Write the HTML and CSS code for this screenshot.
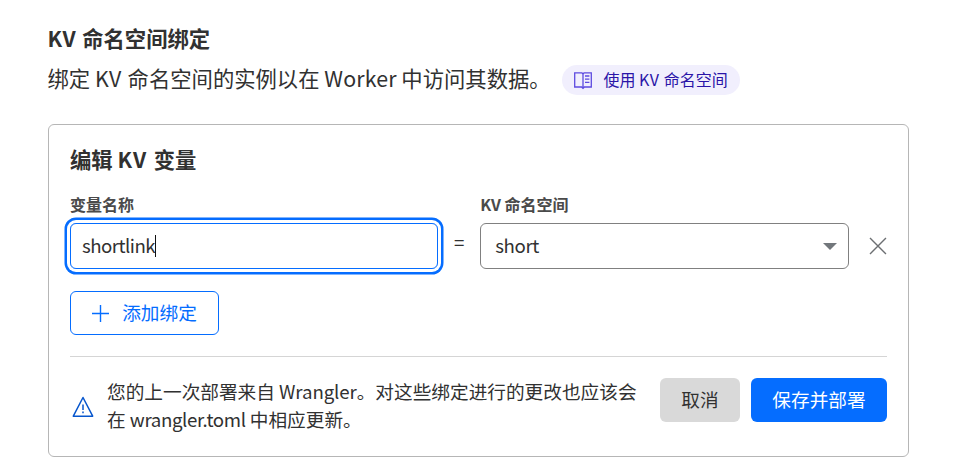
FILE: index.html
```html
<!DOCTYPE html>
<html lang="zh-CN">
<head>
<meta charset="utf-8">
<title>KV 命名空间绑定</title>
<link rel="stylesheet" href="styles.css">
</head>
<body>
<main class="page">
  <h1 class="heading"><span class="kv">KV </span>命名空间绑定</h1>
  <div class="intro">
    <p class="intro-text">绑定 <span class="kv-light">KV </span>命名空间的实例以在 <span class="worker">Worker</span> 中访问其数据。</p>
    <a class="doc-link">
      <svg class="book" width="20" height="20" viewBox="0 0 20 20" fill="none" stroke="currentColor" stroke-width="1.3"><path d="M10 4.2 9 2.8H1.7V17H8.6L10 18.4 11.4 17H18.3V2.8H11L10 4.2V18"/><path d="M12 6h4.4M12 9.2h4.4M12 12.4h4.4"/></svg>
      <span class="doc-text">使用 <span class="kv-small">KV </span>命名空间</span>
    </a>
  </div>
  <section class="card">
    <h2 class="heading">编辑 <span class="kv-wide">KV </span>变量</h2>
    <div class="fields">
      <div class="field">
        <label class="label">变量名称</label>
        <div class="input focused"><span class="value">shortlink</span><i class="caret"></i></div>
      </div>
      <span class="equals">=</span>
      <div class="field">
        <label class="label">KV 命名空间</label>
        <div class="input select"><span class="value short">short</span><svg width="14" height="7" viewBox="0 0 14 7"><path d="M0 0H14L7 7Z" fill="#72777b"/></svg></div>
      </div>
      <svg class="remove" width="18" height="18" viewBox="0 0 18 18" fill="none" stroke="#6c6f72" stroke-width="1.4"><path d="M1 1 17 17M17 1 1 17"/></svg>
    </div>
    <button class="button add"><svg width="17" height="17" viewBox="0 0 17 17" fill="none" stroke="currentColor" stroke-width="1.4"><path d="M8.5 0V17M0 8.5H17"/></svg><span class="button-text">添加绑定</span></button>
    <footer class="footer">
      <svg class="warning" width="22" height="22" viewBox="0 0 22 22" fill="none" stroke="#0756cd" stroke-width="1.5"><path d="M11 1.5 20.7 20.2H1.3Z" stroke-linejoin="round"/><path d="M11 8.5V14M11 15.5V17.2"/></svg>
      <p class="notice">您的上一次部署来自 <span class="name">Wrangler</span>。对这些绑定进行的更改也应该会<br>在 <span class="file">wrangler.toml</span> 中相应更新。</p>
      <button class="button cancel"><span class="button-text">取消</span></button>
      <button class="button save"><span class="button-text">保存并部署</span></button>
    </footer>
  </section>
</main>
</body>
</html>
```
FILE: styles.css
```css
* { box-sizing: border-box; }
body {
  margin: 0;
  background: #fff;
  color: #313131;
  font-family: "Noto Sans CJK SC", sans-serif;
  font-size: 18.67px;
}
h1, h2, p { margin: 0; }
.page { padding: 23px 45px 0 47.5px; }
.heading { font-size: 21.33px; line-height: 30px; font-weight: 700; white-space: nowrap; }
.kv { letter-spacing: 0.8px; }
.kv-light { letter-spacing: 0.7px; }
.kv-small { letter-spacing: 0.6px; }
.kv-wide { letter-spacing: 1.3px; }
.worker { letter-spacing: 0.15px; }
.intro { display: flex; align-items: center; height: 30px; margin-top: 12px; }
.intro-text { width: 514px; padding-bottom: 4px; font-size: 21.33px; line-height: 30px; white-space: nowrap; }
.doc-link {
  display: flex;
  align-items: center;
  gap: 11px;
  width: 178px;
  height: 30px;
  padding-left: 11px;
  border-radius: 15px;
  background: #f1effd;
  color: #2a14a8;
  font-size: 16px;
  white-space: nowrap;
}
.doc-text { padding-bottom: 2px; }
.book { color: #5d4be0; }
.card {
  height: 333px;
  width: 861.5px;
  margin-top: 29px;
  padding: 19px 21.5px 0;
  border: 1.33px solid #b6b6b6;
  border-radius: 6px;
}
.fields { display: flex; align-items: flex-end; margin-top: 20px; height: 75px; }
.field { width: 369px; }
.label { display: block; height: 22px; margin-bottom: 7px; font-size: 16px; line-height: 21px; font-weight: 700; color: #4a4a4a; }
.input {
  display: flex;
  align-items: center;
  height: 46px;
  padding: 0 11px;
  border: 1.33px solid #808080;
  border-radius: 6px;
}
.value { padding-bottom: 4px; letter-spacing: -0.52px; }
.short { letter-spacing: -0.4px; }
.focused { border-color: #056dff; box-shadow: 0 0 0 3px #fff, 0 0 0 5.5px #056dff; }
.caret { width: 1px; height: 22px; background: #111; }
.select { justify-content: space-between; padding-left: 14px; }
.equals { width: 42px; text-align: center; line-height: 54px; }
.remove { margin: 0 0 14px 20px; }
.button {
  display: flex;
  align-items: center;
  justify-content: center;
  height: 44px;
  padding: 0;
  border: 0;
  border-radius: 6px;
  font: inherit;
  line-height: 28px;
}
.button-text { padding-bottom: 3px; }
.add { width: 149px; gap: 13px; margin-top: 22px; border: 1.33px solid #056dff; background: #fff; color: #056dff; }
.footer { display: flex; width: 817px; margin-top: 21px; padding-top: 21px; border-top: 1px solid #d5d5d5; }
.warning { margin: 18px 13px 0 2px; flex: none; }
.notice { width: 553px; margin-top: -1px; line-height: 28px; white-space: nowrap; }
.name { letter-spacing: -0.1px; }
.file { letter-spacing: -0.38px; }
.cancel { width: 80px; background: #d9d9d9; color: #313131; }
.save { width: 136px; margin-left: 11px; background: #056dff; color: #fff; }
```
